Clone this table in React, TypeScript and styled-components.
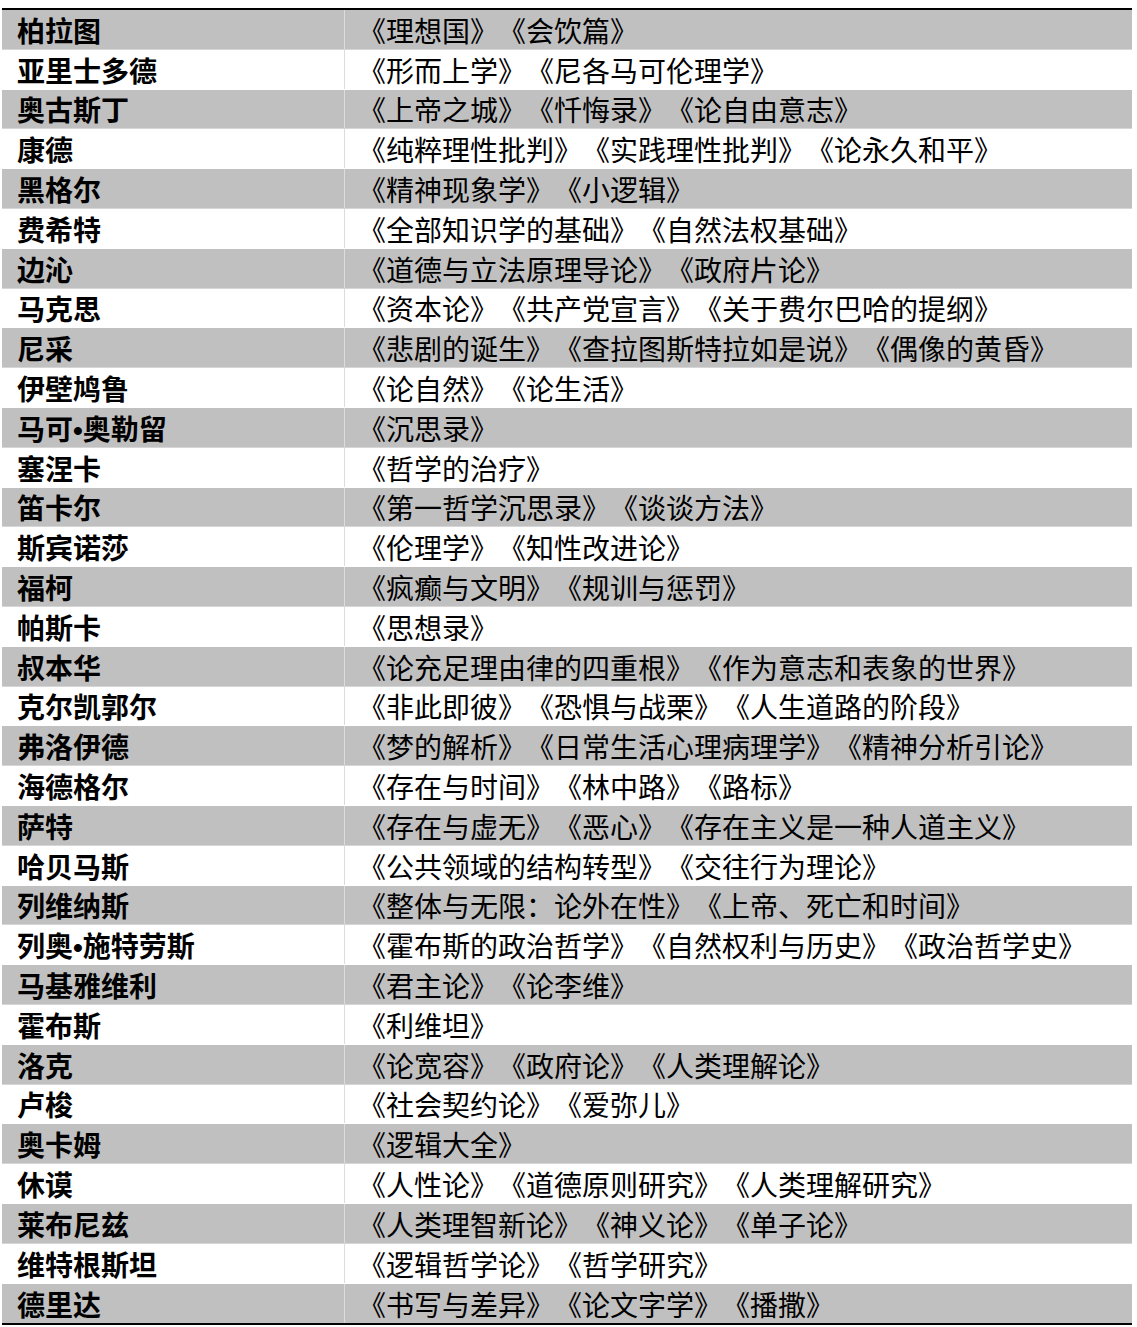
import React from 'react';
import { styled, createGlobalStyle } from 'styled-components';

const GlobalStyle = createGlobalStyle`
  html, body {
    margin: 0;
    padding: 0;
    background: #ffffff;
  }
`;

const rows: [string, string][] = [
  ['柏拉图', '《理想国》《会饮篇》'],
  ['亚里士多德', '《形而上学》《尼各马可伦理学》'],
  ['奥古斯丁', '《上帝之城》《忏悔录》《论自由意志》'],
  ['康德', '《纯粹理性批判》《实践理性批判》《论永久和平》'],
  ['黑格尔', '《精神现象学》《小逻辑》'],
  ['费希特', '《全部知识学的基础》《自然法权基础》'],
  ['边沁', '《道德与立法原理导论》《政府片论》'],
  ['马克思', '《资本论》《共产党宣言》《关于费尔巴哈的提纲》'],
  ['尼采', '《悲剧的诞生》《查拉图斯特拉如是说》《偶像的黄昏》'],
  ['伊壁鸠鲁', '《论自然》《论生活》'],
  ['马可•奥勒留', '《沉思录》'],
  ['塞涅卡', '《哲学的治疗》'],
  ['笛卡尔', '《第一哲学沉思录》《谈谈方法》'],
  ['斯宾诺莎', '《伦理学》《知性改进论》'],
  ['福柯', '《疯癫与文明》《规训与惩罚》'],
  ['帕斯卡', '《思想录》'],
  ['叔本华', '《论充足理由律的四重根》《作为意志和表象的世界》'],
  ['克尔凯郭尔', '《非此即彼》《恐惧与战栗》《人生道路的阶段》'],
  ['弗洛伊德', '《梦的解析》《日常生活心理病理学》《精神分析引论》'],
  ['海德格尔', '《存在与时间》《林中路》《路标》'],
  ['萨特', '《存在与虚无》《恶心》《存在主义是一种人道主义》'],
  ['哈贝马斯', '《公共领域的结构转型》《交往行为理论》'],
  ['列维纳斯', '《整体与无限：论外在性》《上帝、死亡和时间》'],
  ['列奥•施特劳斯', '《霍布斯的政治哲学》《自然权利与历史》《政治哲学史》'],
  ['马基雅维利', '《君主论》《论李维》'],
  ['霍布斯', '《利维坦》'],
  ['洛克', '《论宽容》《政府论》《人类理解论》'],
  ['卢梭', '《社会契约论》《爱弥儿》'],
  ['奥卡姆', '《逻辑大全》'],
  ['休谟', '《人性论》《道德原则研究》《人类理解研究》'],
  ['莱布尼兹', '《人类理智新论》《神义论》《单子论》'],
  ['维特根斯坦', '《逻辑哲学论》《哲学研究》'],
  ['德里达', '《书写与差异》《论文字学》《播撒》'],
];

const Page = styled.div`
  padding: 8px 5px 0 2px;
`;

const Table = styled.div`
  width: 1130px;
  border-top: 2px solid #000000;
  border-bottom: 2px solid #000000;
  display: flex;
  flex-direction: column;
`;

const Row = styled.div<{ $shaded: boolean }>`
  display: grid;
  grid-template-columns: 342px 1fr;
  height: 39.8px;
  box-sizing: border-box;
  background: ${({ $shaded }) => ($shaded ? '#c0c0c0' : '#ffffff')};
  border-bottom: 1px solid ${({ $shaded }) => ($shaded ? '#d6d6d6' : '#ffffff')};
  &:last-child {
    border-bottom: none;
  }
`;

const Cell = styled.div<{ $name?: boolean }>`
  display: flex;
  align-items: center;
  padding-left: ${({ $name }) => ($name ? '15px' : '13px')};
  padding-top: 7px;
  font-family: 'Liberation Sans', 'Noto Sans CJK SC', sans-serif;
  font-size: 28px;
  font-weight: ${({ $name }) => ($name ? 700 : 400)};
  color: #000000;
  white-space: nowrap;
  line-height: 1;
  text-spacing-trim: space-all;
  font-feature-settings: 'halt' 0, 'palt' 0;
  & + & {
    border-left: 1px solid #dcdcdc;
  }
`;

export default function App() {
  return (
    <Page>
      <GlobalStyle />
      <Table>
        {rows.map(([name, works], i) => (
          <Row key={name} $shaded={i % 2 === 0}>
            <Cell $name>{name}</Cell>
            <Cell>{works}</Cell>
          </Row>
        ))}
      </Table>
    </Page>
  );
}
